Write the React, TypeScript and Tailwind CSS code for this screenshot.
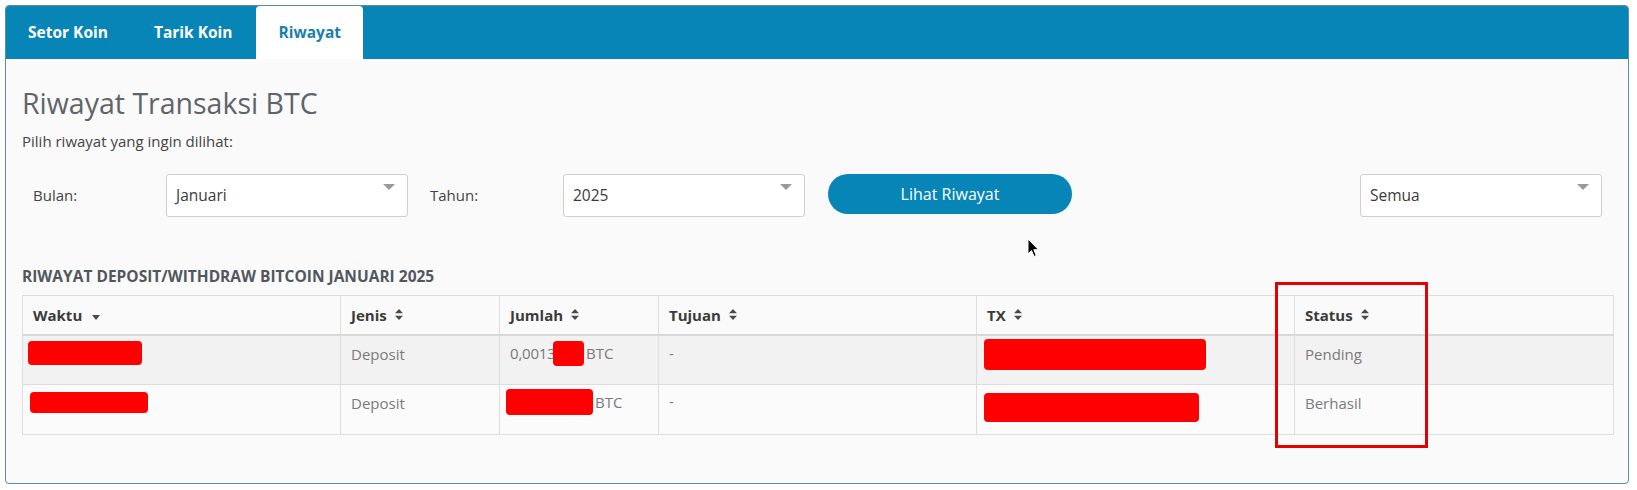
import React from "react";

const FONT = "font-['Open_Sans',_'Liberation_Sans',_sans-serif]";

const tabs = ["Setor Koin", "Tarik Koin", "Riwayat"];

const SortBoth = () => (
  <svg width="8" height="11" viewBox="0 0 8 11" className="ml-[8px] inline-block">
    <path d="M4 0 L8 4.3 L0 4.3 Z" fill="#4a4a4a" />
    <path d="M4 11 L8 6.7 L0 6.7 Z" fill="#4a4a4a" />
  </svg>
);

const SortDown = () => (
  <svg width="8" height="5" viewBox="0 0 8 5" className="ml-[10px] mt-[5px] inline-block">
    <path d="M0 0 L8 0 L4 5 Z" fill="#4a4a4a" />
  </svg>
);

const Select = ({ value }: { value: string }) => (
  <div className="relative flex h-[43px] w-[242px] shrink-0 items-center rounded-[3px] border border-[#cfcfcf] bg-white pl-[9px] text-[15.5px] text-[#3a3a3a]">
    {value}
    <svg width="12" height="6" viewBox="0 0 12 6" className="absolute right-[12px] top-[9px]">
      <path d="M0 0 L12 0 L6 6 Z" fill="#9a9a9a" />
    </svg>
  </div>
);

const Red = ({ className }: { className: string }) => (
  <div className={`shrink-0 rounded-[4px] bg-[#ff0000] ${className}`} />
);

const headers = ["Waktu", "Jenis", "Jumlah", "Tujuan", "TX", "Status"];

const td = "border border-[#dedede] px-[10px] align-top leading-[22px]";

export default function App() {
  return (
    <div className={`relative min-h-[490px] w-full bg-white pl-[5px] pr-[8px] pt-[5px] ${FONT}`}>
      <div className="overflow-hidden rounded-[4px] border border-[#5d8ba3] bg-[#fafafa] pb-[48px]">
        {/* tabs */}
        <div className="flex h-[53px] gap-[2px] bg-[#0785b6]">
          {tabs.map((t) => (
            <div
              key={t}
              className={
                t === "Riwayat"
                  ? "flex items-center rounded-t-[4px] bg-white px-[22px] text-[15.5px] font-bold text-[#1a80aa]"
                  : "flex items-center px-[22px] text-[15.5px] font-bold text-white"
              }
            >
              {t}
            </div>
          ))}
        </div>

        <div className="px-[16px]">
          <h1 className="mt-[26px] text-[28.5px] leading-[36px] font-normal text-[#5f646b]">
            Riwayat Transaksi BTC
          </h1>
          <p className="mt-[10px] text-[15px] leading-[20px] text-[#444]">
            Pilih riwayat yang ingin dilihat:
          </p>

          {/* filters */}
          <div className="mt-[23px] flex items-start">
            <div className="flex h-[43px] w-[144px] items-center pl-[11px] text-[15px] text-[#444]">Bulan:</div>
            <Select value="Januari" />
            <div className="ml-[22px] flex h-[43px] w-[133px] items-center text-[15px] text-[#444]">Tahun:</div>
            <Select value="2025" />
            <button className="ml-[23px] h-[40px] w-[244px] rounded-full bg-[#0785b6] text-[16px] text-white">
              Lihat Riwayat
            </button>
            <div className="flex-1" />
            <div className="mr-[10px]">
              <Select value="Semua" />
            </div>
          </div>

          <h2 className="mt-[49px] text-[15.5px] leading-[20px] font-bold text-[#52575d]">
            RIWAYAT DEPOSIT/WITHDRAW BITCOIN JANUARI 2025
          </h2>

          {/* table */}
          <table className="mt-[9px] w-[1591px] table-fixed border-collapse text-[15px]">
            <colgroup>
              <col className="w-[318px]" />
              <col className="w-[159px]" />
              <col className="w-[159px]" />
              <col className="w-[318px]" />
              <col className="w-[318px]" />
              <col className="w-[319px]" />
            </colgroup>
            <thead>
              <tr className="h-[39px] border-b-2 border-[#d9d9d9] bg-[#fafafa]">
                {headers.map((h, i) => (
                  <th key={h} className="border border-[#dedede] px-[10px] text-left font-bold text-[#3b3b3b]">
                    <span className="inline-flex items-center">
                      {h}
                      {i === 0 ? <SortDown /> : <SortBoth />}
                    </span>
                  </th>
                ))}
              </tr>
            </thead>
            <tbody className="text-[#7a7a7a]">
              <tr className="h-[50px] bg-[#f2f2f2]">
                <td className={`${td} pt-[5px]`}>
                  <Red className="-ml-[5px] h-[24px] w-[114px]" />
                </td>
                <td className={`${td} pt-[7px]`}>Deposit</td>
                <td className={`${td} pt-[5px]`}>
                  <div className="flex h-[25px] items-center">
                    <span className="w-[43px] shrink-0 tracking-[-0.2px]">0,0013</span>
                    <Red className="h-[25px] w-[31px]" />
                    <span className="ml-[2px]">BTC</span>
                  </div>
                </td>
                <td className={`${td} pt-[6px]`}>-</td>
                <td className={`${td} pt-[5px]`}>
                  <Red className="-ml-[3px] -mt-[2px] h-[31px] w-[222px]" />
                </td>
                <td className={`${td} pt-[7px]`}>Pending</td>
              </tr>
              <tr className="h-[50px] bg-[#fbfbfb]">
                <td className={`${td} pt-[6px]`}>
                  <Red className="-ml-[3px] mt-[1px] h-[21px] w-[118px]" />
                </td>
                <td className={`${td} pt-[7px]`}>Deposit</td>
                <td className={`${td} pt-[6px]`}>
                  <div className="-mt-[2px] flex h-[26px] items-center">
                    <Red className="-ml-[4px] h-[26px] w-[87px]" />
                    <span className="ml-[2px]">BTC</span>
                  </div>
                </td>
                <td className={`${td} pt-[5px]`}>-</td>
                <td className={`${td} pt-[6px]`}>
                  <Red className="-ml-[3px] mt-[2px] h-[29px] w-[215px]" />
                </td>
                <td className={`${td} pt-[7px]`}>Berhasil</td>
              </tr>
            </tbody>
          </table>
        </div>
      </div>

      {/* annotation box */}
      <div className="absolute left-[1275px] top-[282px] h-[166px] w-[153px] border-[3px] border-[#e60000]" />

      {/* mouse cursor */}
      <svg width="13" height="20" viewBox="0 0 13 20" className="absolute left-[1027px] top-[238px]">
        <path d="M1 1 L1 16 L4.5 12.5 L7 18.5 L9.3 17.5 L6.8 11.7 L11.5 11.7 Z" fill="#000" stroke="#fff" strokeWidth="1" />
      </svg>
    </div>
  );
}
